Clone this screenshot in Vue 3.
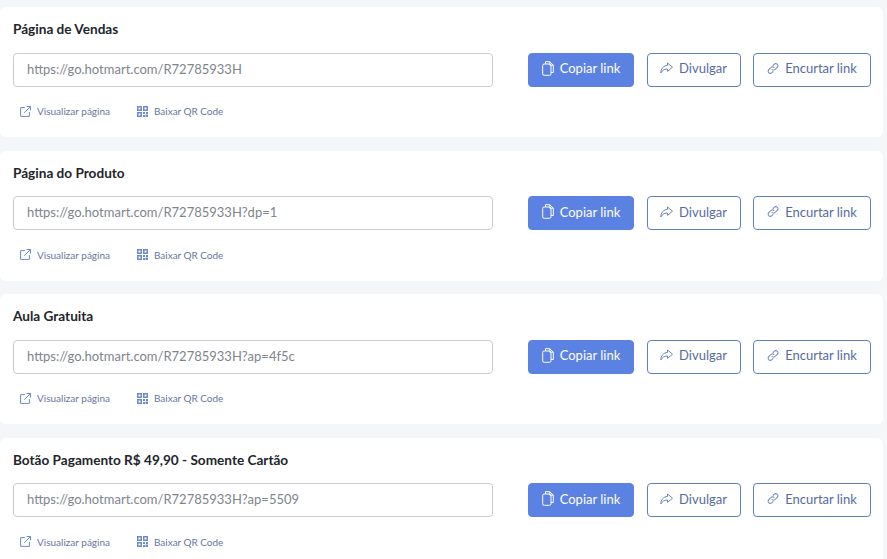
<script setup>
const items = [
  { title: 'Página de Vendas', url: 'https://go.hotmart.com/R72785933H' },
  { title: 'Página do Produto', url: 'https://go.hotmart.com/R72785933H?dp=1' },
  { title: 'Aula Gratuita', url: 'https://go.hotmart.com/R72785933H?ap=4f5c' },
  { title: 'Botão Pagamento R$ 49,90 - Somente Cartão', url: 'https://go.hotmart.com/R72785933H?ap=5509' },
]
</script>

<template>
  <div class="page">
    <section v-for="item in items" :key="item.url" class="card">
      <h3 class="title">{{ item.title }}</h3>
      <div class="row">
        <div class="input">{{ item.url }}</div>
        <div class="actions">
          <button class="btn primary copy">
            <svg width="12" height="15" viewBox="0 0 12 15" fill="none" stroke="currentColor" stroke-width="1" stroke-linejoin="round"><path d="M3.500 3V.7h4.300l3.500 3.500v7.300H9"/><path d="M7.800.7v3.500h3.500"/><rect x=".7" y="3" width="8.300" height="11.300" rx="1.500"/></svg>
            Copiar link
          </button>
          <button class="btn share">
            <svg width="13" height="12" viewBox="0 0 13 12" fill="none" stroke="currentColor" stroke-width="1" stroke-linejoin="round"><path d="M7.500 1l5 4.200-5 4.200V7C4.500 7 2.500 8 .8 11 .8 6.800 3.500 3.700 7.500 3.400z"/></svg>
            Divulgar
          </button>
          <button class="btn shorten">
            <svg width="12" height="13" viewBox="0 0 13 13" fill="none" stroke="currentColor" stroke-width="1.100" stroke-linecap="round"><path d="M5.400 7.600a2.300 2.300 0 0 0 3.300 0l2.400-2.400a2.300 2.300 0 0 0-3.300-3.300L6.600 3.100"/><path d="M7.600 5.400a2.300 2.300 0 0 0-3.300 0L1.900 7.800a2.300 2.300 0 0 0 3.300 3.300l1.200-1.200"/></svg>
            Encurtar link
          </button>
        </div>
      </div>
      <div class="links">
        <a class="link view">
          <svg width="11" height="11" viewBox="0 0 11 11" fill="none" stroke="currentColor" stroke-width="1"><path d="M5 1.600H.6v8.800h8.800V6"/><path d="M4.200 6.800L10.400.6M6.600.5h3.900v3.900"/></svg>
          Visualizar página
        </a>
        <a class="link qr">
          <svg width="11" height="11" viewBox="0 0 11 11" fill="#6f8bcb"><path d="M0 0h5v5H0zM6 0h5v5H6zM0 6h5v5H0z"/><path d="M1.500 1.500h2v2h-2zM7.500 1.500h2v2h-2zM1.500 7.500h2v2h-2z" fill="#fff"/><path d="M6 6h2v2H6zM9 6h2v2H9zM6 9h2v2H6zM8.500 8.500h2.500v2.500H8.500z"/></svg>
          Baixar QR Code
        </a>
      </div>
    </section>
  </div>
</template>

<style scoped>
.page {
  width: 887px;
  height: 559px;
  overflow: hidden;
  box-sizing: border-box;
  padding-top: 7px;
  background: #f5f6f8;
  font-family: Lato, "Open Sans", sans-serif;
  display: flex;
  flex-direction: column;
  gap: 13.500px;
}
.card {
  flex: none;
  width: 883px;
  height: 130px;
  box-sizing: border-box;
  padding: 14px 13px 0;
  background: #fff;
  border-radius: 6px;
}
.title {
  margin: 0;
  font-size: 13.600px;
  line-height: 17px;
  font-weight: 700;
  color: #22252b;
}
.row {
  display: flex;
  justify-content: space-between;
  margin-top: 14.900px;
}
.input {
  width: 480px;
  height: 34px;
  box-sizing: border-box;
  padding-left: 13px;
  border: 1px solid #c9ccd1;
  border-radius: 4px;
  font-size: 13px;
  line-height: 31px;
  color: #80858c;
}
.actions {
  display: flex;
  gap: 12.500px;
  margin-right: -1px;
}
.btn {
  height: 34px;
  box-sizing: border-box;
  display: flex;
  align-items: center;
  justify-content: center;
  gap: 6px;
  padding: 0 0 3px;
  border: 1px solid #5f7fbd;
  border-radius: 4px;
  background: #fff;
  color: #566b9f;
  font: 400 13px Lato, "Open Sans", sans-serif;
}
.primary {
  background: #5b82e3;
  border-color: #5b82e3;
  color: #fff;
}
.copy { width: 106px; }
.share { width: 94px; }
.shorten { width: 118px; }
.links {
  display: flex;
  gap: 27px;
  margin: 17.500px 0 0 7px;
}
.link {
  display: flex;
  align-items: center;
  gap: 6px;
  font-size: 10px;
  line-height: 14px;
  color: #66769f;
}
.qr { letter-spacing: -0.03px; }
.link svg { flex: none; }
.view svg { color: #6f8bcb; }
.share svg, .shorten svg { color: #6f86b8; }
</style>

<style>
html, body { margin: 0; background: #f5f6f8; }
</style>
